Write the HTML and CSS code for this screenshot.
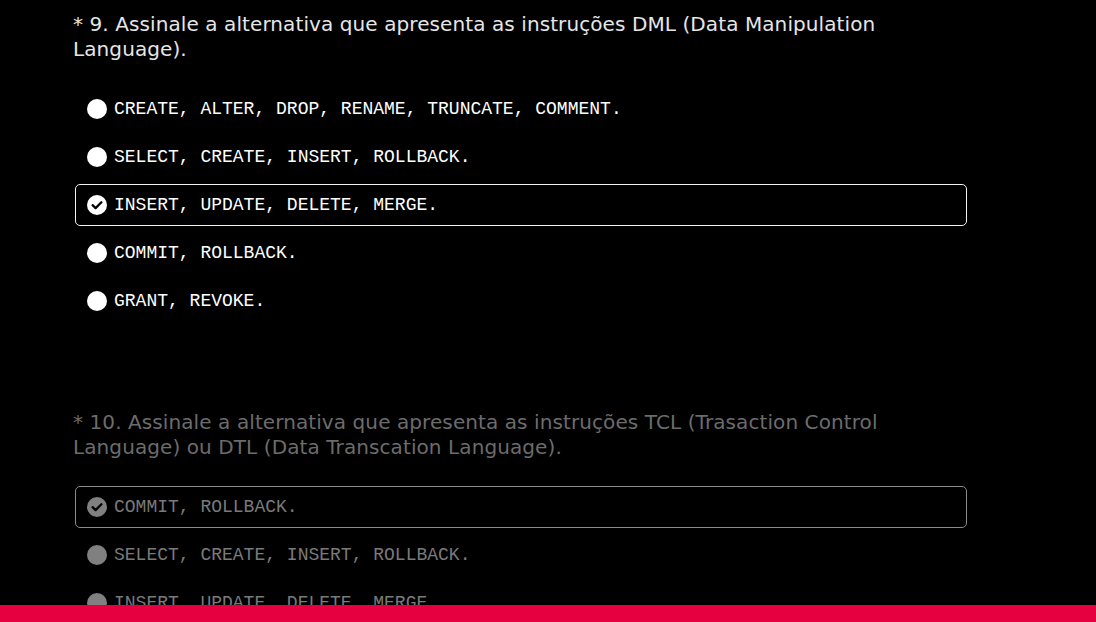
FILE: index.html
```html
<!DOCTYPE html>
<html lang="pt">
<head>
<meta charset="utf-8">
<link rel="stylesheet" href="styles.css">
</head>
<body>
<main class="form">
  <section class="question">
    <h2 class="q-title">* 9. Assinale a alternativa que apresenta as instruções DML (Data Manipulation Language).</h2>
    <ul class="options">
      <li class="option"><span class="radio"></span><span class="label">CREATE, ALTER, DROP, RENAME, TRUNCATE, COMMENT.</span></li>
      <li class="option"><span class="radio"></span><span class="label">SELECT, CREATE, INSERT, ROLLBACK.</span></li>
      <li class="option selected"><span class="radio checked"><svg viewBox="0 0 20 20" width="20" height="20"><circle cx="10" cy="10" r="10" fill="currentColor"/><path d="M5.6 10.2 L8.6 13.1 L14.4 7.2" fill="none" stroke="#000" stroke-width="2.3" stroke-linecap="round" stroke-linejoin="round"/></svg></span><span class="label">INSERT, UPDATE, DELETE, MERGE.</span></li>
      <li class="option"><span class="radio"></span><span class="label">COMMIT, ROLLBACK.</span></li>
      <li class="option"><span class="radio"></span><span class="label">GRANT, REVOKE.</span></li>
    </ul>
  </section>
  <section class="question inactive">
    <h2 class="q-title">* 10. Assinale a alternativa que apresenta as instruções TCL (Trasaction Control Language) ou DTL (Data Transcation Language).</h2>
    <ul class="options">
      <li class="option selected"><span class="radio checked"><svg viewBox="0 0 20 20" width="20" height="20"><circle cx="10" cy="10" r="10" fill="currentColor"/><path d="M5.6 10.2 L8.6 13.1 L14.4 7.2" fill="none" stroke="#000" stroke-width="2.3" stroke-linecap="round" stroke-linejoin="round"/></svg></span><span class="label">COMMIT, ROLLBACK.</span></li>
      <li class="option"><span class="radio"></span><span class="label">SELECT, CREATE, INSERT, ROLLBACK.</span></li>
      <li class="option"><span class="radio"></span><span class="label">INSERT, UPDATE, DELETE, MERGE.</span></li>
    </ul>
  </section>
</main>
<div class="footer-bar"></div>
</body>
</html>
```
FILE: styles.css
```css
html, body {
  margin: 0;
  padding: 0;
  background: #000;
  height: 100%;
  overflow: hidden;
}
.form {
  padding: 12px 0 0 73px;
  width: 895px;
}
.question {
  margin-bottom: 88px;
}
.q-title {
  margin: 0 0 26px 0;
  font-family: "DejaVu Sans", Verdana, sans-serif;
  font-weight: normal;
  font-size: 20px;
  line-height: 25px;
  letter-spacing: 0.09px;
  color: #e6e6e6;
  width: 840px;
}
.options {
  list-style: none;
  margin: 0 0 0 2px;
  padding: 0;
  display: flex;
  flex-direction: column;
  gap: 6px;
}
.option {
  box-sizing: border-box;
  height: 42px;
  width: 892px;
  border: 1px solid transparent;
  border-radius: 5px;
  padding-left: 11px;
  display: flex;
  align-items: center;
  gap: 7px;
}
.option.selected {
  border-color: #f2f2f2;
}
.radio {
  width: 20px;
  height: 20px;
  border-radius: 50%;
  background: #fff;
  color: #fff;
  flex: none;
  display: block;
}
.radio.checked {
  background: none;
}
.radio svg {
  display: block;
}
.label {
  font-family: "Liberation Mono", "Courier New", monospace;
  font-size: 18px;
  color: #fff;
  white-space: pre;
}
.inactive .q-title {
  color: #6c6c6c;
}
.inactive .option.selected {
  border-color: #8a8a8a;
}
.inactive .radio {
  background: #808080;
  color: #808080;
}
.inactive .radio.checked {
  background: none;
}
.inactive .label {
  color: #7a7a7a;
}
.footer-bar {
  position: fixed;
  left: 0;
  right: 0;
  bottom: 0;
  height: 17px;
  background: #e60040;
}
```
